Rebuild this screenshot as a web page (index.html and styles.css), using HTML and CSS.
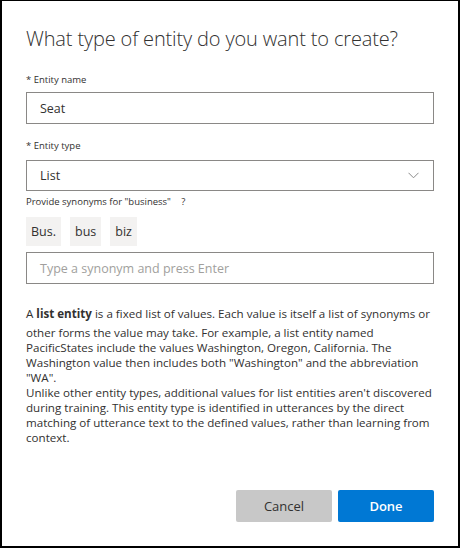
FILE: index.html
```html
<!DOCTYPE html>
<html lang="en">
<head>
<meta charset="utf-8">
<title>Create entity</title>
<link rel="stylesheet" href="styles.css">
</head>
<body>
<div class="dialog">
  <h1 class="title">What type of entity do you want to create?</h1>
  <div class="field">
    <label class="label">* Entity name</label>
    <div class="input"><span class="value">Seat</span></div>
  </div>
  <div class="field field-type">
    <label class="label">* Entity type</label>
    <div class="input select">
      <span class="value">List</span>
      <svg class="chevron" width="11" height="7" viewBox="0 0 11 7"><path d="M0.5 0.8 L5.5 5.8 L10.5 0.8" fill="none" stroke="#8a8a8a" stroke-width="1"/></svg>
    </div>
  </div>
  <div class="hint">Provide synonyms for "business" <span class="q">?</span></div>
  <div class="chips">
    <span class="chip">Bus.</span>
    <span class="chip">bus</span>
    <span class="chip">biz</span>
  </div>
  <div class="input"><span class="placeholder">Type a synonym and press Enter</span></div>
  <div class="desc">
    <p>A <b>list entity</b> is a fixed list of values. Each value is itself a list of synonyms or other forms the value may take. For example, a list entity named PacificStates include the values Washington, Oregon, California. The Washington value then includes both "Washington" and the abbreviation "WA".</p>
    <p>Unlike other entity types, additional values for list entities aren't discovered during training. This entity type is identified in utterances by the direct matching of utterance text to the defined values, rather than learning from context.</p>
  </div>
  <div class="actions">
    <button class="btn btn-cancel">Cancel</button>
    <button class="btn btn-done">Done</button>
  </div>
</div>
</body>
</html>
```

FILE: styles.css
```css
* { box-sizing: border-box; }
html, body { margin: 0; padding: 0; background: #fff; }
body { font-family: "Open Sans", "Noto Sans", sans-serif; color: #323130; }

.dialog {
  width: 460px;
  height: 548px;
  border-style: solid;
  border-color: #000;
  border-width: 1px 2px 2px 2px;
  padding: 0 24px;
  display: flex;
  flex-direction: column;
}

.title {
  margin: 24px 0 0 0;
  font-weight: 300;
  font-size: 20px;
  line-height: 28px;
  color: #323130;
  letter-spacing: -0.15px;
}

.field { margin-top: 20px; display: flex; flex-direction: column; }
.field-type { margin-top: 15px; }

.label {
  font-size: 9.5px;
  line-height: 14px;
  color: #323130;
  margin-bottom: 5px;
}
.field-type .label { margin-bottom: 7px; }

.input {
  height: 32px;
  border: 1px solid #8a8886;
  display: flex;
  align-items: center;
  padding: 0 13px;
  font-size: 12.5px;
}

.select { height: 31px; justify-content: space-between; padding-right: 14px; }
.chevron { display: block; }

.value { color: #323130; }
.placeholder { color: #a19f9d; }

.hint {
  font-size: 9.5px;
  line-height: 14px;
  margin-top: 4px;
  color: #323130;
}
.q { margin-left: 8px; }

.chips { display: flex; gap: 9px; margin: 8px 0 6px 0; }
.chip {
  height: 29px;
  background: #f3f2f1;
  display: flex;
  align-items: center;
  padding: 0 5px;
  font-size: 12.5px;
  color: #323130;
}

.desc { margin-top: 18px; font-size: 11.6px; line-height: 15px; color: #323130; }
.desc p { margin: 0; }
.desc b { font-weight: 700; line-height: 23px; }

.actions {
  margin-top: auto;
  margin-bottom: 24px;
  display: flex;
  justify-content: flex-end;
  gap: 6px;
}
.btn {
  width: 96px;
  height: 32px;
  border: none;
  border-radius: 2px;
  font-family: "Open Sans", "Noto Sans", sans-serif;
  font-size: 13px;
  font-weight: 600;
  padding: 0;
}
.btn-cancel { background: #c8c8c8; color: #323130; font-weight: 400; }
.btn-done { background: #0078d4; color: #fff; }
```
